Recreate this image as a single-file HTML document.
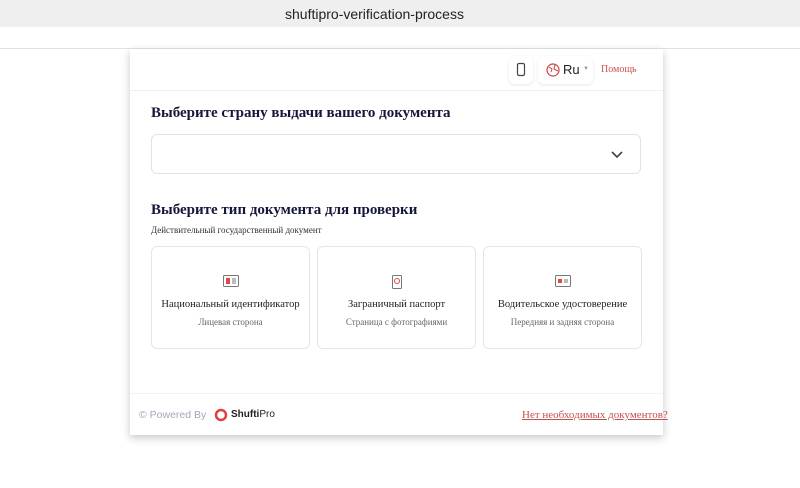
<!DOCTYPE html>
<html><head><meta charset="utf-8"><style>
body{margin:0;width:800px;height:488px;background:#fff;font-family:"Liberation Serif",serif;position:relative;overflow:hidden}
.top{position:absolute;left:0;top:0;width:800px;height:27px;background:#efefef;font-family:"Liberation Sans",sans-serif;font-size:14px;color:#222}
.top span{position:absolute;left:285px;top:6px}
.line{position:absolute;left:0;top:48px;width:800px;height:1px;background:#e3e3e3}
.card{position:absolute;left:130px;top:49px;width:533px;height:386px;background:#fff;box-shadow:0 3px 8px rgba(0,0,0,.22)}
.hdr{position:absolute;left:0;top:0;width:533px;height:41px;border-bottom:1px solid #f0f0f0}
.btn{position:absolute;top:7px;height:28px;border-radius:6px;background:#fff;box-shadow:0 1px 3px rgba(0,0,0,.1)}
h2{position:absolute;left:21px;margin:0;font-size:15px;font-weight:bold;color:#16163a}
.sel{position:absolute;left:21px;top:85px;width:488px;height:38px;border:1px solid #dfe3ea;border-radius:6px}
.doc{position:absolute;top:197px;width:157px;height:101px;border:1px solid #e2e6ec;border-radius:6px;text-align:center}
.doc .t{position:absolute;top:52px;width:100%;font-size:10.5px;color:#222}
.doc .s{position:absolute;top:70px;width:100%;font-size:9px;color:#666}
.doc svg{position:absolute;left:71px;top:28px}
.foot{position:absolute;left:0;top:344px;width:533px;height:42px;border-top:1px solid #f3f3f3;font-family:"Liberation Sans",sans-serif;white-space:nowrap}
</style></head><body>
<div class="top"><span>shuftipro-verification-process</span></div>
<div class="line"></div>
<div class="card">
 <div class="hdr">
  <div class="btn" style="left:379px;width:24px"><svg width="24" height="28"><rect x="8.5" y="7.5" width="7" height="12" rx="1.5" fill="none" stroke="#444" stroke-width="1.2"/></svg></div>
  <div class="btn" style="left:408px;width:55px;font-family:'Liberation Sans',sans-serif;font-size:13px;color:#222">
   <svg width="20" height="28" style="position:absolute;left:4px;top:0"><circle cx="11" cy="14" r="6" fill="none" stroke="#c44" stroke-width="1.2"/><path d="M7 11 l3 2 l-1 3 M13 9 l-1 4 l4 2" fill="none" stroke="#c44" stroke-width="1"/></svg>
   <span style="position:absolute;left:25px;top:6px">Ru</span>
   <span style="position:absolute;left:45px;top:10px;font-size:6px;color:#999">▼</span>
  </div>
  <span style="position:absolute;left:471px;top:15px;font-size:10px;color:#d05050">Помощь</span>
 </div>
 <h2 style="top:56px">Выберите страну выдачи вашего документа</h2>
 <div class="sel"><svg width="14" height="10" style="position:absolute;right:16px;top:15px"><path d="M2 2 l5 5 l5 -5" fill="none" stroke="#444" stroke-width="1.6"/></svg></div>
 <h2 style="top:153px">Выберите тип документа для проверки</h2>
 <div style="position:absolute;left:21px;top:176px;font-size:9px;color:#333">Действительный государственный документ</div>
 <div class="doc" style="left:21px"><svg width="16" height="12"><rect x="0.5" y="0.5" width="15" height="11" rx="1" fill="none" stroke="#777"/><rect x="3" y="3" width="4" height="6" fill="#e04848"/><path d="M9 4h4M9 6h4M9 8h4" stroke="#777"/></svg><div class="t">Национальный идентификатор</div><div class="s">Лицевая сторона</div></div>
 <div class="doc" style="left:187px"><svg width="16" height="14"><rect x="3.5" y="0.5" width="9" height="13" rx="1" fill="none" stroke="#777"/><circle cx="8" cy="6" r="2.5" fill="none" stroke="#e04848"/></svg><div class="t">Заграничный паспорт</div><div class="s">Страница с фотографиями</div></div>
 <div class="doc" style="left:353px"><svg width="16" height="12"><rect x="0.5" y="0.5" width="15" height="11" rx="1" fill="none" stroke="#777"/><rect x="3" y="4" width="4" height="4" fill="#e04848"/><path d="M9 5h4M9 7h4" stroke="#777"/></svg><div class="t">Водительское удостоверение</div><div class="s">Передняя и задняя сторона</div></div>
 <div class="foot">
  <span style="position:absolute;left:9px;top:15px;font-size:10.5px;color:#a0a8b8">© Powered By</span>
  <svg width="14" height="14" style="position:absolute;left:84px;top:14px"><circle cx="7" cy="7" r="5" fill="none" stroke="#e04040" stroke-width="2.5"/></svg>
  <span style="position:absolute;left:101px;top:15px;font-size:10px;color:#222"><b>Shufti</b>Pro</span>
  <span style="position:absolute;left:392px;top:15px;font-family:'Liberation Serif',serif;font-size:11px;color:#c05050;text-decoration:underline">Нет необходимых документов?</span>
 </div>
</div>
</body></html>
